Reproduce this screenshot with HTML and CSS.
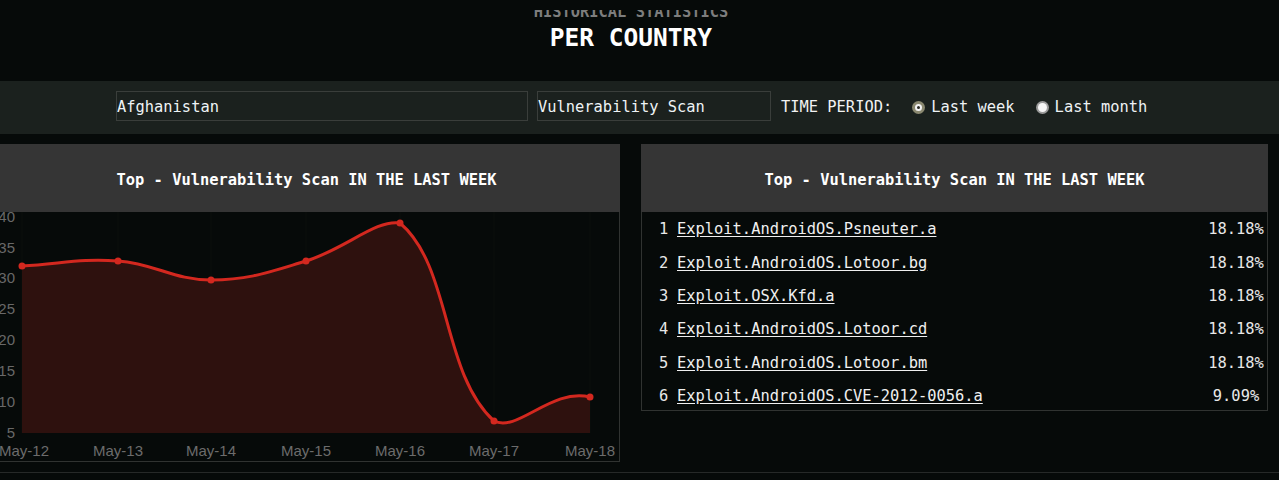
FILE: index.html
```html
<!DOCTYPE html>
<html lang="en">
<head>
<meta charset="utf-8">
<title>Per Country</title>
<link rel="stylesheet" href="styles.css">
</head>
<body>
<header class="page-head">
  <div class="kicker-clip"><div class="kicker">HISTORICAL STATISTICS</div></div>
  <h1 class="title">PER COUNTRY</h1>
</header>

<section class="filters">
  <input class="field field-country" type="text" value="Afghanistan">
  <input class="field field-type" type="text" value="Vulnerability Scan">
  <span class="period-label">TIME PERIOD:</span>
  <label class="radio"><span class="dot dot-on"></span>Last week</label>
  <label class="radio"><span class="dot dot-off"></span>Last month</label>
</section>

<main class="panels">
  <section class="panel">
    <div class="panel-head">Top - Vulnerability Scan IN THE LAST WEEK</div>
    <div class="panel-body chart-body">
      <svg class="chart" width="625" height="249" viewBox="0 0 625 249">
        <g transform="translate(6,-212)">
          <g class="grid">
            <line x1="22" y1="212" x2="22" y2="433"/>
            <line x1="118" y1="212" x2="118" y2="433"/>
            <line x1="211" y1="212" x2="211" y2="433"/>
            <line x1="306" y1="212" x2="306" y2="433"/>
            <line x1="400" y1="212" x2="400" y2="433"/>
            <line x1="494" y1="212" x2="494" y2="433"/>
            <line x1="590" y1="212" x2="590" y2="433"/>
          </g>
          <path class="area" d="M22,266 C60.4,264 80,258.2 118,261 C155.6,263.8 173.8,280 211,280 C249,280 269.1,272.1 306,261 C344.7,249.3 376.2,219 400,223 C451.4,266.8 441.6,373.1 494,421 C517.6,433 551.6,387.4 590,397 L590,433 L22,433 Z"/>
          <path class="line" d="M22,266 C60.4,264 80,258.2 118,261 C155.6,263.8 173.8,280 211,280 C249,280 269.1,272.1 306,261 C344.7,249.3 376.2,219 400,223 C451.4,266.8 441.6,373.1 494,421 C517.6,433 551.6,387.4 590,397"/>
          <g class="pts">
            <circle cx="22" cy="266" r="3.5"/>
            <circle cx="118" cy="261" r="3.5"/>
            <circle cx="211" cy="280" r="3.5"/>
            <circle cx="306" cy="261" r="3.5"/>
            <circle cx="400" cy="223" r="3.5"/>
            <circle cx="494" cy="421" r="3.5"/>
            <circle cx="590" cy="397" r="3.5"/>
          </g>
          <g class="ylab">
            <text x="15" y="221.5">40</text>
            <text x="15" y="252.5">35</text>
            <text x="15" y="283">30</text>
            <text x="15" y="313.5">25</text>
            <text x="15" y="344.5">20</text>
            <text x="15" y="376">15</text>
            <text x="15" y="406.5">10</text>
            <text x="15" y="437.5">5</text>
          </g>
          <g class="xlab">
            <text x="24" y="456">May-12</text>
            <text x="118" y="456">May-13</text>
            <text x="211" y="456">May-14</text>
            <text x="306" y="456">May-15</text>
            <text x="400" y="456">May-16</text>
            <text x="494" y="456">May-17</text>
            <text x="590" y="456">May-18</text>
          </g>
        </g>
      </svg>
    </div>
  </section>

  <section class="panel">
    <div class="panel-head">Top - Vulnerability Scan IN THE LAST WEEK</div>
    <ol class="panel-body list">
      <li class="row"><span class="num">1</span><a class="name" href="#">Exploit.AndroidOS.Psneuter.a</a><span class="pct">18.18%</span></li>
      <li class="row"><span class="num">2</span><a class="name" href="#">Exploit.AndroidOS.Lotoor.bg</a><span class="pct">18.18%</span></li>
      <li class="row"><span class="num">3</span><a class="name" href="#">Exploit.OSX.Kfd.a</a><span class="pct">18.18%</span></li>
      <li class="row"><span class="num">4</span><a class="name" href="#">Exploit.AndroidOS.Lotoor.cd</a><span class="pct">18.18%</span></li>
      <li class="row"><span class="num">5</span><a class="name" href="#">Exploit.AndroidOS.Lotoor.bm</a><span class="pct">18.18%</span></li>
      <li class="row"><span class="num">6</span><a class="name" href="#">Exploit.AndroidOS.CVE-2012-0056.a</a><span class="pct">9.09%</span></li>
    </ol>
  </section>
</main>

<div class="footer-rule"></div>
</body>
</html>
```

FILE: styles.css
```css
html, body {
  margin: 0;
  padding: 0;
  background: #060a09;
  overflow: hidden;
}

body {
  font-family: "DejaVu Sans Mono", "Liberation Mono", monospace;
  font-size: 15.4px;
  color: #e8e8e8;
  height: 480px;
}

.page-head {
  text-align: center;
  padding-right: 17px;
}

.kicker-clip {
  margin-top: 10px;
  height: 7px;
  overflow: hidden;
}

.kicker {
  margin-top: -7.5px;
  line-height: 18px;
  font-weight: bold;
  color: #7d7d7d;
}

.title {
  margin: 7px 0 0;
  font-size: 24.5px;
  line-height: 28px;
  font-weight: bold;
  color: #ffffff;
}

.filters {
  margin-top: 29px;
  background: #1b211e;
  height: 53px;
  box-sizing: border-box;
  padding: 10px 0 13px 116px;
  display: flex;
  align-items: center;
}

.field {
  box-sizing: border-box;
  height: 30px;
  background: transparent;
  border: 1px solid #3a3e3b;
  color: #eef3f5;
  font-family: inherit;
  font-size: 15.4px;
  padding: 2px 0 0 0;
  margin: 0;
  outline: none;
}

.field-country {
  width: 412px;
}

.field-type {
  width: 234px;
  margin-left: 9px;
}

.period-label {
  margin-left: 10px;
  padding-top: 2px;
  color: #f2f2f2;
}

.radio {
  display: flex;
  align-items: center;
  padding-top: 2px;
  color: #eef2f4;
}

.radio:first-of-type {
  margin-left: 20px;
}

.radio + .radio {
  margin-left: 21px;
}

.dot {
  width: 13px;
  height: 13px;
  border-radius: 50%;
  box-sizing: border-box;
  margin-right: 6px;
  display: flex;
  align-items: center;
  justify-content: center;
}

.dot-on {
  background: #8a8870;
}

.dot-on::after {
  content: "";
  width: 7px;
  height: 7px;
  box-sizing: border-box;
  border-radius: 50%;
  border: 2px solid #f4f4f4;
  background: #2a2a24;
}

.dot-off {
  background: #9b9b9b;
}

.dot-off::after {
  content: "";
  width: 9px;
  height: 9px;
  border-radius: 50%;
  background: #f6f6f6;
}

.panels {
  display: flex;
  align-items: flex-start;
  gap: 21px;
  margin: 10px 0 0 -7px;
}

.panel {
  width: 627px;
  flex: 0 0 627px;
}

.panel-head {
  height: 68px;
  box-sizing: border-box;
  padding-top: 3px;
  background: #353535;
  display: flex;
  align-items: center;
  justify-content: center;
  font-weight: bold;
  color: #ffffff;
}

.panel-body {
  border: 1px solid #303331;
  border-top: 0;
  margin: 0;
}

.chart-body {
  height: 249px;
}

.chart {
  display: block;
}

.grid line {
  stroke: #0a0f0d;
  stroke-width: 1;
}

.area {
  fill: #2e110e;
}

.line {
  fill: none;
  stroke: #d3281f;
  stroke-width: 3;
}

.pts circle {
  fill: #d3281f;
}

.ylab text {
  font-family: "Liberation Sans", Arial, sans-serif;
  font-size: 15px;
  fill: #686868;
  text-anchor: end;
}

.xlab text {
  font-family: "Liberation Sans", Arial, sans-serif;
  font-size: 15px;
  fill: #6c6c6c;
  text-anchor: middle;
}

.list {
  list-style: none;
  padding: 0 1px 0 17px;
  height: 198px;
}

.row {
  height: 33.4px;
  display: flex;
  align-items: center;
  padding-top: 1px;
  box-sizing: border-box;
}

.num {
  width: 18px;
  flex: 0 0 18px;
}

.name {
  color: #f0f0f0;
  text-decoration: underline;
  text-underline-offset: 2px;
}

.pct {
  margin-left: auto;
  width: 60px;
  text-align: center;
}

.footer-rule {
  margin-top: 10px;
  height: 1px;
  background: #262928;
}
```
